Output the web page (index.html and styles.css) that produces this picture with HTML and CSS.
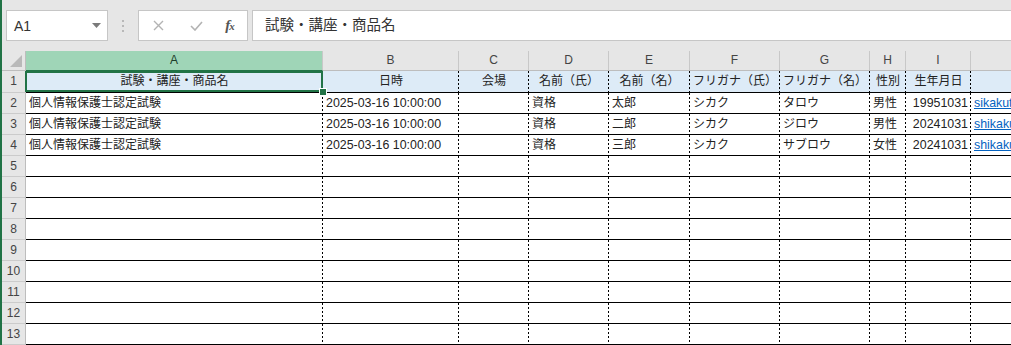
FILE: index.html
```html
<!DOCTYPE html>
<html lang="ja">
<head>
    <meta charset="UTF-8">
    <title>Book1 - Sheet1</title>
    <link rel="stylesheet" href="styles.css">
</head>
<body>
<div class="window">
    <div class="formula-bar">
        <div class="name-box">
            <span class="cell-ref">A1</span>
            <svg width="9" height="5" viewBox="0 0 9 5"><path d="M0 0h9L4.5 5z" fill="#7a7a7a"/></svg>
        </div>
        <div class="grip"><i></i><i></i><i></i></div>
        <div class="fx-buttons">
            <span class="fx-btn">
                <svg width="11" height="11" viewBox="0 0 11 11"><path d="M1 1l9 9M10 1l-9 9" stroke="#b3b3b3" stroke-width="1.4" fill="none"/></svg>
            </span>
            <span class="fx-btn">
                <svg width="13" height="10" viewBox="0 0 13 10"><path d="M1 5l4 4 7-8" stroke="#b3b3b3" stroke-width="1.6" fill="none"/></svg>
            </span>
            <span class="fx-btn fx">f<sub>x</sub></span>
        </div>
        <div class="formula-input">試験・講座・商品名</div>
    </div>

    <div class="sheet">
        <div class="row heads">
            <div class="corner"><svg width="12" height="12" viewBox="0 0 12 12"><path d="M12 0V12H0z" fill="#b9b9b9"/></svg></div>
            <div class="ch ch-active">A</div>
            <div class="ch">B</div>
            <div class="ch">C</div>
            <div class="ch">D</div>
            <div class="ch">E</div>
            <div class="ch">F</div>
            <div class="ch">G</div>
            <div class="ch">H</div>
            <div class="ch">I</div>
            <div class="ch"></div>
        </div>

        <div class="row r1">
            <div class="rh">1</div>
            <div class="cell sel">試験・講座・商品名</div>
            <div class="cell">日時</div>
            <div class="cell">会場</div>
            <div class="cell">名前（氏）</div>
            <div class="cell">名前（名）</div>
            <div class="cell">フリガナ（氏）</div>
            <div class="cell">フリガナ（名）</div>
            <div class="cell">性別</div>
            <div class="cell">生年月日</div>
            <div class="cell"></div>
        </div>
        <div class="row">
            <div class="rh">2</div>
            <div class="cell">個人情報保護士認定試験</div>
            <div class="cell lat">2025-03-16 10:00:00</div>
            <div class="cell"></div>
            <div class="cell">資格</div>
            <div class="cell">太郎</div>
            <div class="cell">シカク</div>
            <div class="cell">タロウ</div>
            <div class="cell">男性</div>
            <div class="cell lat num">19951031</div>
            <div class="cell lat"><a class="link">sikakutaro@example.com</a></div>
        </div>
        <div class="row">
            <div class="rh">3</div>
            <div class="cell">個人情報保護士認定試験</div>
            <div class="cell lat">2025-03-16 10:00:00</div>
            <div class="cell"></div>
            <div class="cell">資格</div>
            <div class="cell">二郎</div>
            <div class="cell">シカク</div>
            <div class="cell">ジロウ</div>
            <div class="cell">男性</div>
            <div class="cell lat num">20241031</div>
            <div class="cell lat"><a class="link">shikakujiro@example.com</a></div>
        </div>
        <div class="row">
            <div class="rh">4</div>
            <div class="cell">個人情報保護士認定試験</div>
            <div class="cell lat">2025-03-16 10:00:00</div>
            <div class="cell"></div>
            <div class="cell">資格</div>
            <div class="cell">三郎</div>
            <div class="cell">シカク</div>
            <div class="cell">サブロウ</div>
            <div class="cell">女性</div>
            <div class="cell lat num">20241031</div>
            <div class="cell lat"><a class="link">shikakusaburo@example.com</a></div>
        </div>
        <div class="row"><div class="rh">5</div><div class="cell"></div><div class="cell"></div><div class="cell"></div><div class="cell"></div><div class="cell"></div><div class="cell"></div><div class="cell"></div><div class="cell"></div><div class="cell"></div><div class="cell"></div></div>
        <div class="row"><div class="rh">6</div><div class="cell"></div><div class="cell"></div><div class="cell"></div><div class="cell"></div><div class="cell"></div><div class="cell"></div><div class="cell"></div><div class="cell"></div><div class="cell"></div><div class="cell"></div></div>
        <div class="row"><div class="rh">7</div><div class="cell"></div><div class="cell"></div><div class="cell"></div><div class="cell"></div><div class="cell"></div><div class="cell"></div><div class="cell"></div><div class="cell"></div><div class="cell"></div><div class="cell"></div></div>
        <div class="row"><div class="rh">8</div><div class="cell"></div><div class="cell"></div><div class="cell"></div><div class="cell"></div><div class="cell"></div><div class="cell"></div><div class="cell"></div><div class="cell"></div><div class="cell"></div><div class="cell"></div></div>
        <div class="row"><div class="rh">9</div><div class="cell"></div><div class="cell"></div><div class="cell"></div><div class="cell"></div><div class="cell"></div><div class="cell"></div><div class="cell"></div><div class="cell"></div><div class="cell"></div><div class="cell"></div></div>
        <div class="row"><div class="rh">10</div><div class="cell"></div><div class="cell"></div><div class="cell"></div><div class="cell"></div><div class="cell"></div><div class="cell"></div><div class="cell"></div><div class="cell"></div><div class="cell"></div><div class="cell"></div></div>
        <div class="row"><div class="rh">11</div><div class="cell"></div><div class="cell"></div><div class="cell"></div><div class="cell"></div><div class="cell"></div><div class="cell"></div><div class="cell"></div><div class="cell"></div><div class="cell"></div><div class="cell"></div></div>
        <div class="row"><div class="rh">12</div><div class="cell"></div><div class="cell"></div><div class="cell"></div><div class="cell"></div><div class="cell"></div><div class="cell"></div><div class="cell"></div><div class="cell"></div><div class="cell"></div><div class="cell"></div></div>
        <div class="row"><div class="rh">13</div><div class="cell"></div><div class="cell"></div><div class="cell"></div><div class="cell"></div><div class="cell"></div><div class="cell"></div><div class="cell"></div><div class="cell"></div><div class="cell"></div><div class="cell"></div></div>
    </div>
</div>
</body>
</html>
```

FILE: styles.css
```css
* { margin: 0; padding: 0; box-sizing: border-box; }
body {
    font-family: "Liberation Sans", "Noto Sans CJK JP", sans-serif;
    background: #fff;
    color: #222;
    overflow: hidden;
}
.window { height: 345px; border-left: 2px solid #217346; overflow: hidden; }

/* formula bar */
.formula-bar { display: flex; align-items: flex-start; height: 51px; padding: 10px 0 0 4px; background: #e6e6e6; }
.name-box {
    width: 102px; height: 31px; background: #fff; border: 1px solid #c6c6c6;
    display: flex; align-items: center; justify-content: space-between; padding: 0 6px 0 7px;
}
.cell-ref { font-size: 14px; color: #333; }
.grip { width: 30px; height: 31px; display: flex; flex-direction: column; align-items: center; justify-content: center; gap: 3px; }
.grip i { display: block; width: 2px; height: 2px; background: #b8b8b8; }
.fx-buttons { width: 110px; height: 31px; background: #fff; border: 1px solid #c6c6c6; display: flex; align-items: center; }
.fx-btn { width: 38px; display: flex; justify-content: center; align-items: center; }
.fx-btn.fx { width: 30px; font-family: "Liberation Serif", serif; font-style: italic; font-weight: bold; font-size: 15px; color: #555; }
.fx sub { font-size: 11px; vertical-align: -1px; margin-left: -1px; }
.formula-input {
    flex: 1; height: 31px; margin-left: 4px; margin-right: -2px; background: #fff; border: 1px solid #c6c6c6;
    padding-left: 12px; font-size: 14.5px; line-height: 29px; color: #333; white-space: nowrap;
}

/* sheet grid */
.row {
    display: grid;
    grid-template-columns: 24px 297px 136px 70px 80px 81px 90px 90px 36px 65px 140px;
    height: 21px;
}
.heads { height: 20px; background: #e6e6e6; }
.corner {
    border-right: 1px solid #bdbdbd; border-bottom: 1px solid #bdbdbd;
    display: flex; justify-content: flex-end; align-items: flex-end; padding: 0 3px 3px 0;
}
.ch {
    border-right: 1px solid #c8c8c8; border-bottom: 1px solid #bdbdbd;
    text-align: center; font-size: 12px; line-height: 19px; color: #444;
}
.ch-active { background: #9fd5b7; color: #1d3d2b; border-bottom-color: #217346; }
.rh {
    background: #e6e6e6; border-right: 1px solid #bdbdbd; border-bottom: 1px solid #cbcbcb;
    text-align: center; font-size: 12px; line-height: 20px; color: #444;
}
.cell {
    border-bottom: 1px solid #000;
    background: linear-gradient(#000 50%, transparent 50%) right top / 1px 4px repeat-y;
    padding: 0 3px; font-size: 12px; line-height: 20px;
    white-space: nowrap; overflow: hidden;
}
.r1 { height: 22px; }
.r1 .rh { line-height: 21px; }
.r1 .cell { background-color: #ddebf7; padding: 0; text-align: center; line-height: 21px; overflow: visible; }
.lat { font-size: 12.4px; }
.num { text-align: right; }
.link { color: #0563c1; text-decoration: underline; }

/* active cell frame */
.sel { position: relative; }
.sel::before {
    content: ""; position: absolute; left: -1px; top: 0; right: 0; bottom: 0;
    border: 2px solid #217346;
}
.sel::after {
    content: ""; position: absolute; right: -4px; bottom: -4px; width: 6px; height: 6px;
    background: #217346; border: 1px solid #fff;
}
```
